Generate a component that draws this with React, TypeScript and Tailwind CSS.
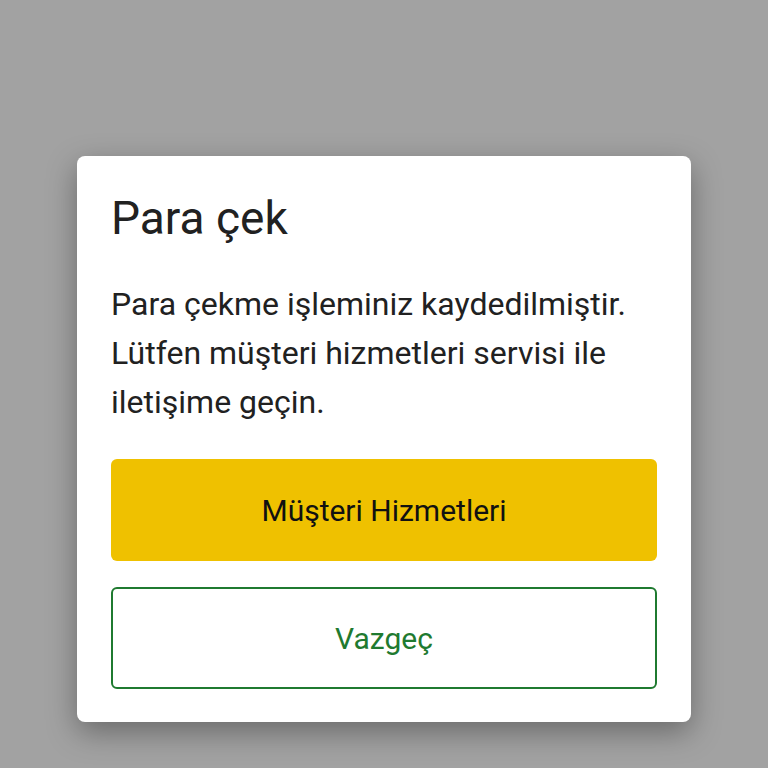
export default function App() {
  return (
    <div
      className="flex h-[768px] w-[768px] items-start justify-center bg-[#a2a2a2] pt-[156px]"
      style={{ fontFamily: "Roboto, 'Noto Sans', sans-serif" }}
    >
      <div className="flex w-[614px] flex-col rounded-[8px] bg-white px-[34px] pb-[33px] pt-[34px] shadow-[0_10px_30px_rgba(0,0,0,0.35)]">
        <h2 className="text-[46px] leading-[56px] text-[#212121]">Para çek</h2>
        <p className="mt-[34px] text-[32px] leading-[49px] text-[#212121]">
          Para çekme işleminiz kaydedilmiştir. Lütfen müşteri hizmetleri servisi ile iletişime geçin.
        </p>
        <button className="mt-[32px] flex h-[102px] items-center justify-center rounded-[6px] bg-[#efc100] text-[30px] text-[#111111]">
          Müşteri Hizmetleri
        </button>
        <button className="mt-[26px] flex h-[102px] items-center justify-center rounded-[6px] border-2 border-[#1f7a30] bg-white text-[30px] text-[#1f7a30]">
          Vazgeç
        </button>
      </div>
    </div>
  );
}
